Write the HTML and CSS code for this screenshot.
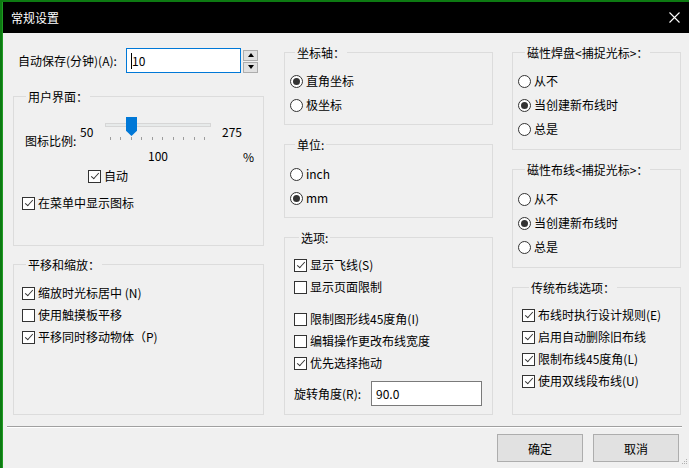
FILE: index.html
```html
<!DOCTYPE html>
<html lang="zh-CN">
<head>
<meta charset="utf-8">
<title>常规设置</title>
<link rel="stylesheet" href="styles.css">
</head>
<body>
<div class="window">
  <div class="titlebar">
    <span class="title">常规设置</span>
    <svg class="close" width="11" height="11" viewBox="0 0 11 11"><path d="M0.5 0.5 L10.5 10.5 M10.5 0.5 L0.5 10.5" stroke="#fff" stroke-width="1.1" fill="none"/></svg>
  </div>

  <div class="main">
    <div class="col col-left">
      <div class="autosave">
        <span class="autosave-label">自动保存(分钟)(A):</span>
        <div class="input focus"><span class="caret"></span>10</div>
        <div class="spin">
          <span class="spin-btn"><span class="tri up"></span></span>
          <span class="spin-btn"><span class="tri down"></span></span>
        </div>
      </div>

      <div class="group g-ui">
        <div class="legend">用户界面：</div>
        <div class="scale">
          <span class="scale-label">图标比例:</span>
          <span class="scale-min">50</span>
          <div class="slider">
            <div class="track"></div>
            <div class="thumb"></div>
            <div class="ticks"><i></i><i></i><i></i><i></i><i></i><i></i><i></i><i></i><i></i><i></i></div>
          </div>
          <span class="scale-max">275</span>
          <span class="scale-val">100</span>
          <span class="scale-unit">%</span>
        </div>
        <label class="opt opt-auto"><span class="cb on"></span>自动</label>
        <label class="opt opt-menu"><span class="cb on"></span>在菜单中显示图标</label>
      </div>

      <div class="group g-pan">
        <div class="legend">平移和缩放：</div>
        <div class="rows">
          <label class="opt"><span class="cb on"></span>缩放时光标居中 (N)</label>
          <label class="opt"><span class="cb"></span>使用触摸板平移</label>
          <label class="opt"><span class="cb on"></span>平移同时移动物体（P)</label>
        </div>
      </div>
    </div>

    <div class="col col-mid">
      <div class="group g-axis">
        <div class="legend">坐标轴：</div>
        <div class="rows radios p8">
          <label class="opt"><span class="rd on"></span>直角坐标</label>
          <label class="opt"><span class="rd"></span>极坐标</label>
        </div>
      </div>

      <div class="group g-unit">
        <div class="legend">单位:</div>
        <div class="rows radios p9">
          <label class="opt"><span class="rd"></span>inch</label>
          <label class="opt"><span class="rd on"></span>mm</label>
        </div>
      </div>

      <div class="group g-opts">
        <div class="legend">选项:</div>
        <div class="rows checks">
          <label class="opt"><span class="cb on"></span>显示飞线(S)</label>
          <label class="opt"><span class="cb"></span>显示页面限制</label>
          <label class="opt spaced"><span class="cb"></span>限制图形线45度角(I)</label>
          <label class="opt"><span class="cb"></span>编辑操作更改布线宽度</label>
          <label class="opt"><span class="cb on"></span>优先选择拖动</label>
        </div>
        <div class="rotate">
          <span class="rotate-label">旋转角度(R):</span>
          <div class="input plain">90.0</div>
        </div>
      </div>
    </div>

    <div class="col col-right">
      <div class="group g-pad">
        <div class="legend">磁性焊盘&lt;捕捉光标&gt;：</div>
        <div class="rows radios p8">
          <label class="opt"><span class="rd"></span>从不</label>
          <label class="opt"><span class="rd on"></span>当创建新布线时</label>
          <label class="opt"><span class="rd"></span>总是</label>
        </div>
      </div>

      <div class="group g-track">
        <div class="legend">磁性布线&lt;捕捉光标&gt;：</div>
        <div class="rows radios p9">
          <label class="opt"><span class="rd"></span>从不</label>
          <label class="opt"><span class="rd on"></span>当创建新布线时</label>
          <label class="opt"><span class="rd"></span>总是</label>
        </div>
      </div>

      <div class="group g-legacy">
        <div class="legend">传统布线选项：</div>
        <div class="rows checks">
          <label class="opt"><span class="cb on"></span>布线时执行设计规则(E)</label>
          <label class="opt"><span class="cb on"></span>启用自动删除旧布线</label>
          <label class="opt"><span class="cb on"></span>限制布线45度角(L)</label>
          <label class="opt"><span class="cb on"></span>使用双线段布线(U)</label>
        </div>
      </div>
    </div>
  </div>

  <div class="separator"></div>

  <div class="buttons">
    <button class="btn">确定</button>
    <button class="btn">取消</button>
  </div>

  <svg class="grip" width="7" height="7" viewBox="0 0 7 7">
    <rect x="5" y="0" width="1" height="1" fill="#b0b0b0"/>
    <rect x="3" y="2" width="1" height="1" fill="#b0b0b0"/>
    <rect x="5" y="2" width="1" height="1" fill="#b0b0b0"/>
    <rect x="1" y="4" width="1" height="1" fill="#b0b0b0"/>
    <rect x="3" y="4" width="1" height="1" fill="#b0b0b0"/>
    <rect x="5" y="4" width="1" height="1" fill="#b0b0b0"/>
  </svg>
</div>
</body>
</html>
```

FILE: styles.css
```css
* { box-sizing: border-box; }

html, body {
  margin: 0;
  height: 100%;
}

body {
  background: #0d7a12;
  padding: 2px 0 0 2px;
  overflow: hidden;
  font-family: "Noto Sans CJK SC", "Noto Sans", sans-serif;
  font-size: 12px;
  line-height: 16px;
  color: #000;
}

.window {
  position: relative;
  width: 687px;
  height: 466px;
  background: #f0f0f0;
  border-left: 1px solid #1f9a22;
  display: flex;
  flex-direction: column;
}

/* title bar */
.titlebar {
  height: 31px;
  background: #000;
  color: #fff;
  display: flex;
  align-items: center;
  padding: 1px 9px 0 8px;
  flex: none;
}
.title { flex: 1; }
.close { display: block; margin-top: -1px; }

/* three columns of groups */
.main {
  display: grid;
  grid-template-columns: 251px 209px 168px;
  column-gap: 20px;
  padding: 15px 0 0 10px;
  align-items: start;
  flex: none;
}
.col { display: flex; flex-direction: column; }
.col-mid { margin-top: 4px; gap: 19px; }
.col-right { margin-top: 4px; gap: 19px; margin-left: -1px; }

.group {
  border: 1px solid #dcdcdc;
  display: flex;
  flex-direction: column;
}
.legend {
  height: 16px;
  margin-top: -8px;
  padding: 0 2px;
  background: #f0f0f0;
  align-self: flex-start;
  white-space: nowrap;
}
.col-left .legend { margin-left: 4px; }
.col-mid .legend { margin-left: 5px; }
.col-right .legend { margin-left: 7px; }

.g-ui { height: 150px; margin-top: 23px; padding-left: 8px; }
.g-pan { height: 151px; margin-top: 18px; padding-left: 8px; }
.g-axis { height: 73px; padding-left: 5px; }
.g-unit { height: 74px; padding-left: 5px; }
.g-opts { height: 178px; padding-left: 9px; }
.g-pad { height: 98px; padding-left: 5px; }
.g-track { height: 99px; padding-left: 5px; }
.g-legacy { height: 128px; padding-left: 9px; }

/* option rows */
.rows { display: flex; flex-direction: column; padding-top: 8px; }
.g-pan .rows { padding-top: 9px; }
.rows.p9 { padding-top: 9px; }
.opt {
  display: flex;
  align-items: center;
  height: 22px;
  white-space: nowrap;
}
.radios .opt { height: 24px; }
.opt.spaced { margin-top: 10px; }
.opt-auto { margin-left: 66px; margin-top: 1px; align-self: flex-start; }
.opt-menu { margin-top: 5px; }

.cb {
  position: relative;
  width: 13px;
  height: 13px;
  border: 1px solid #333;
  background: #fff;
  margin-right: 3px;
  flex: none;
}
.cb.on::after {
  content: "";
  position: absolute;
  left: 2px;
  top: 2px;
  width: 7px;
  height: 3px;
  border-left: 1px solid #333;
  border-bottom: 1px solid #333;
  transform: rotate(-48deg);
}

.rd {
  position: relative;
  width: 13px;
  height: 13px;
  border: 1px solid #333;
  border-radius: 50%;
  background: #fff;
  margin-right: 3px;
  flex: none;
}
.rd.on::after {
  content: "";
  position: absolute;
  left: 2px;
  top: 2px;
  width: 7px;
  height: 7px;
  border-radius: 50%;
  background: #333;
}

/* auto-save field */
.autosave {
  display: flex;
  align-items: center;
  height: 25px;
}
.autosave-label { width: 113px; padding-left: 5px; }
.input {
  height: 25px;
  background: #fff;
  display: flex;
  align-items: center;
}
.input.focus {
  width: 115px;
  border: 1px solid #0078d7;
  padding-left: 4px;
}
.caret {
  width: 1px;
  height: 16px;
  background: #000;
}
.spin {
  display: flex;
  flex-direction: column;
  gap: 1px;
  margin-left: 2px;
  padding-top: 1px;
}
.spin-btn {
  width: 15px;
  height: 11px;
  background: #e1e1e1;
  border: 1px solid #adadad;
  display: flex;
  align-items: center;
  justify-content: center;
}
.tri { width: 0; height: 0; border-left: 3px solid transparent; border-right: 3px solid transparent; }
.tri.up { border-bottom: 4px solid #000; }
.tri.down { border-top: 4px solid #000; }

/* icon scale slider */
.scale {
  display: grid;
  grid-template-columns: 55px 25px 117px auto;
  grid-template-rows: 9px 16px 8px 16px;
  margin-top: 10px;
  margin-left: 3px;
}
.scale-label { grid-column: 1; grid-row: 2 / 4; align-self: end; margin-bottom: -1px; white-space: nowrap; }
.scale-min { grid-column: 2; grid-row: 2; }
.slider { grid-column: 3; grid-row: 1 / 4; position: relative; }
.scale-max { grid-column: 4; grid-row: 2; }
.scale-val { grid-column: 3; grid-row: 4; margin-left: 43px; }
.scale-unit { grid-column: 4; grid-row: 4; margin-left: 21px; margin-top: 1px; }

.track {
  width: 106px;
  height: 4px;
  margin-top: 8px;
  background: #e7eaea;
  border: 1px solid #d6d6d6;
}
.thumb {
  position: absolute;
  left: 21px;
  top: 2px;
  width: 11px;
  height: 19px;
  background: #0078d7;
  clip-path: polygon(0 0, 100% 0, 100% 72%, 50% 100%, 0 72%);
}
.ticks {
  display: flex;
  justify-content: space-between;
  width: 95px;
  margin: 10px 0 0 5px;
}
.ticks i { display: block; width: 1px; height: 3px; background: #9d9d9d; }

/* rotation field */
.rotate {
  display: flex;
  align-items: center;
  margin-top: 7px;
  height: 25px;
}
.rotate-label { width: 77px; }
.input.plain {
  width: 111px;
  border: 1px solid #7a7a7a;
  padding-left: 4px;
}

/* footer */
.separator {
  margin: 11px 7px 0 4px;
  border-top: 1px solid #a0a0a0;
  border-bottom: 1px solid #fff;
  flex: none;
}
.buttons {
  display: flex;
  justify-content: flex-end;
  gap: 10px;
  padding-right: 10px;
  margin-top: 6px;
}
.btn {
  width: 86px;
  height: 28px;
  background: #e1e1e1;
  border: 1px solid #adadad;
  font-family: inherit;
  font-size: 12px;
  color: #000;
  padding: 0;
}

.grip {
  position: absolute;
  right: 1px;
  bottom: 2px;
}
```
